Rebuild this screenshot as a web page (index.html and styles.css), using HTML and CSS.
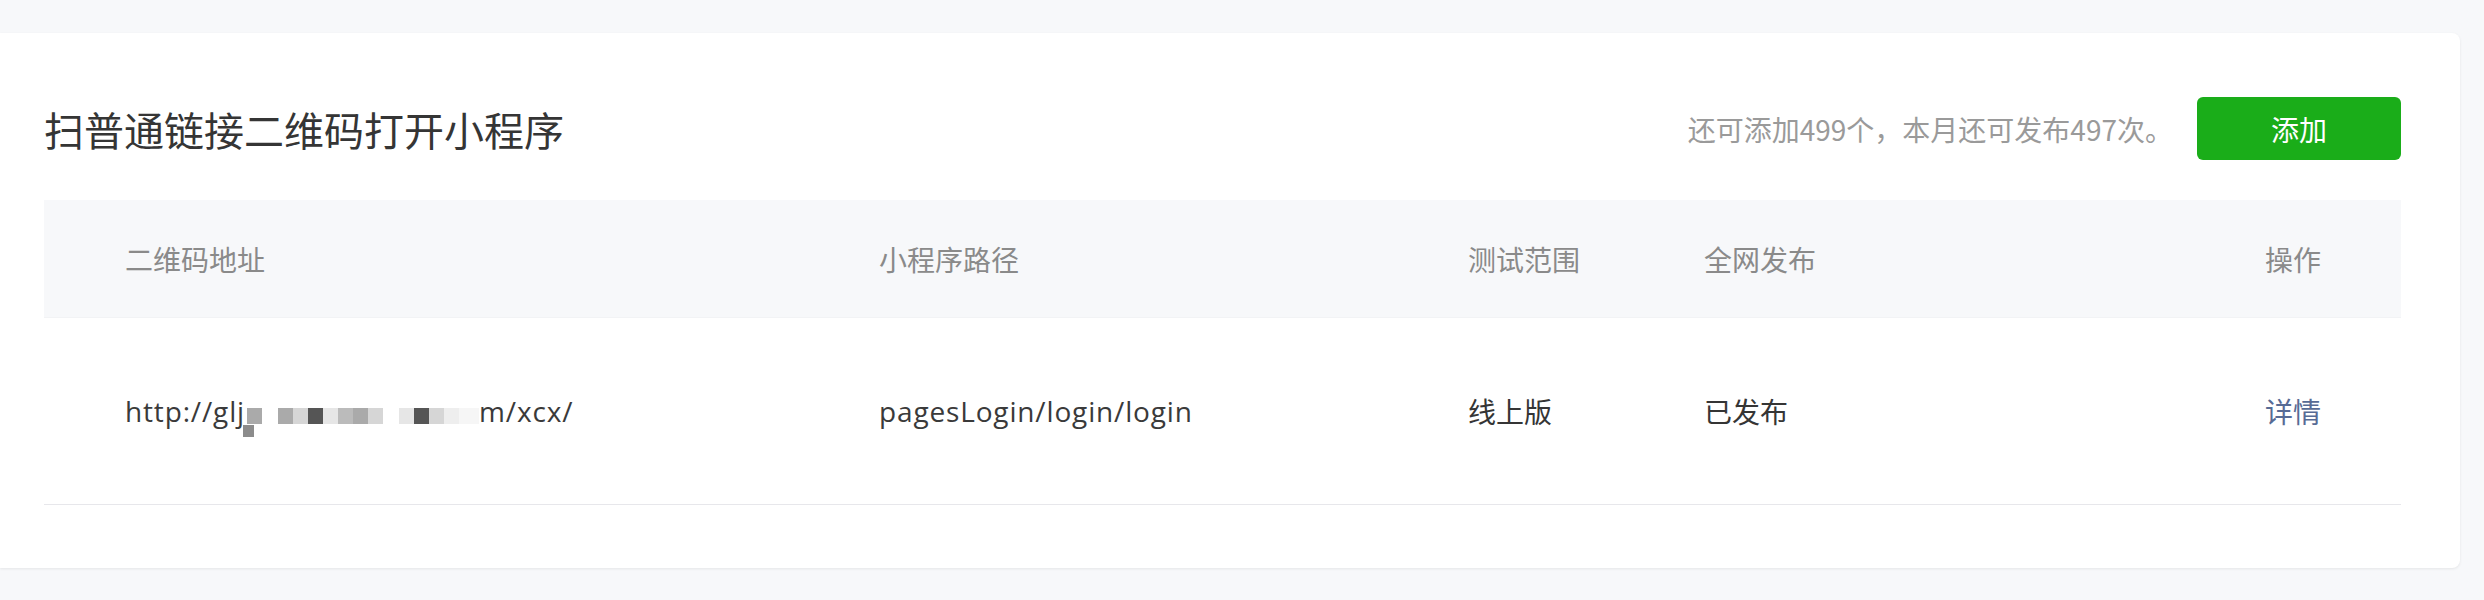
FILE: index.html
```html
<!DOCTYPE html>
<html lang="zh-CN">
<head>
    <meta charset="UTF-8"/>
    <title>扫普通链接二维码打开小程序</title>
    <link rel="stylesheet" href="styles.css">
</head>
<body>
<div class="card">
    <!-- 标题 + 配额 + 添加按钮 -->
    <div class="card-head">
        <h2 class="card-title">扫普通链接二维码打开小程序</h2>
        <div class="head-extra">
            <span class="quota">还可添加499个，本月还可发布497次。</span>
            <button class="btn-primary">添加</button>
        </div>
    </div>

    <!-- 规则列表 -->
    <div class="table">
        <div class="tr th">
            <div class="td">二维码地址</div>
            <div class="td">小程序路径</div>
            <div class="td">测试范围</div>
            <div class="td">全网发布</div>
            <div class="td">操作</div>
        </div>
        <div class="tr">
            <div class="td latin">
                http://glj<span class="mosaic"><i class="m2 tail"></i><i class="gap"></i><i class="m2"></i><i class="m4"></i><i class="m1"></i><i class="m5"></i><i class="m3"></i><i class="m2"></i><i class="m4"></i><i class="gap"></i><i class="m5"></i><i class="m1"></i><i class="m4"></i><i class="m6"></i><i class="m6 fade"></i></span>m/xcx/
            </div>
            <div class="td latin">pagesLogin/login/login</div>
            <div class="td">线上版</div>
            <div class="td">已发布</div>
            <div class="td"><a class="link" href="#">详情</a></div>
        </div>
    </div>
</div>
</body>
</html>
```

FILE: styles.css
```css
* {
    margin: 0;
    padding: 0;
    box-sizing: border-box;
}

body {
    background-color: #f7f8fa;
    font-family: "Open Sans", "Noto Sans CJK SC", sans-serif;
    color: #353535;
    padding: 33px 24px 35px 0;
}

/* 卡片 */
.card {
    background-color: #ffffff;
    border-radius: 0 8px 8px 0;
    box-shadow: 0 1px 3px rgba(0, 0, 0, 0.08);
    padding: 64px 59px 63px 44px;
}

.card-head {
    display: flex;
    align-items: center;
    justify-content: space-between;
    height: 63px;
    margin-bottom: 40px;
}

.card-title {
    font-size: 40px;
    font-weight: normal;
    color: #353535;
    font-family: "Noto Sans CJK SC", sans-serif;
}

.head-extra {
    display: flex;
    align-items: center;
    gap: 24px;
}

.quota {
    font-size: 28px;
    color: #9a9a9a;
    font-family: "Noto Sans CJK SC", sans-serif;
}

.btn-primary {
    width: 204px;
    height: 63px;
    background-color: #1aad19;
    color: #ffffff;
    border: none;
    border-radius: 6px;
    font-size: 28px;
    font-family: "Noto Sans CJK SC", sans-serif;
    cursor: pointer;
}

/* 表格 */
.tr {
    display: grid;
    grid-template-columns: 754px 589px 236px 561px 1fr;
    align-items: center;
    height: 187px;
    border-bottom: 1px solid #e7e7eb;
    font-size: 28px;
}

.tr.th {
    height: 118px;
    background-color: #f7f8fa;
    border-bottom: 1px solid #f2f3f5;
    color: #8a8a8a;
    font-family: "Noto Sans CJK SC", sans-serif;
}

.td {
    padding-left: 81px;
    white-space: nowrap;
}

.td.latin {
    letter-spacing: 0.85px;
    color: #3a3a3a;
}

.link {
    color: #576b95;
    text-decoration: none;
}

/* 打码区域 */
.mosaic {
    display: inline-flex;
    vertical-align: -2px;
    height: 16px;
    margin-left: 2px;
}

.mosaic i {
    display: block;
    width: 15px;
    height: 16px;
}

.mosaic i.gap {
    width: 16px;
}

.mosaic i.tail {
    box-shadow: -6px 15px 0 -2px #8c8c8c;
}

.mosaic i.fade {
    width: 20px;
    opacity: 0.5;
}

.m1 { background-color: #555555; }
.m2 { background-color: #aaaaaa; }
.m3 { background-color: #bbbbbb; }
.m4 { background-color: #d6d6d6; }
.m5 { background-color: #e6e6e6; }
.m6 { background-color: #eeeeee; }
```
